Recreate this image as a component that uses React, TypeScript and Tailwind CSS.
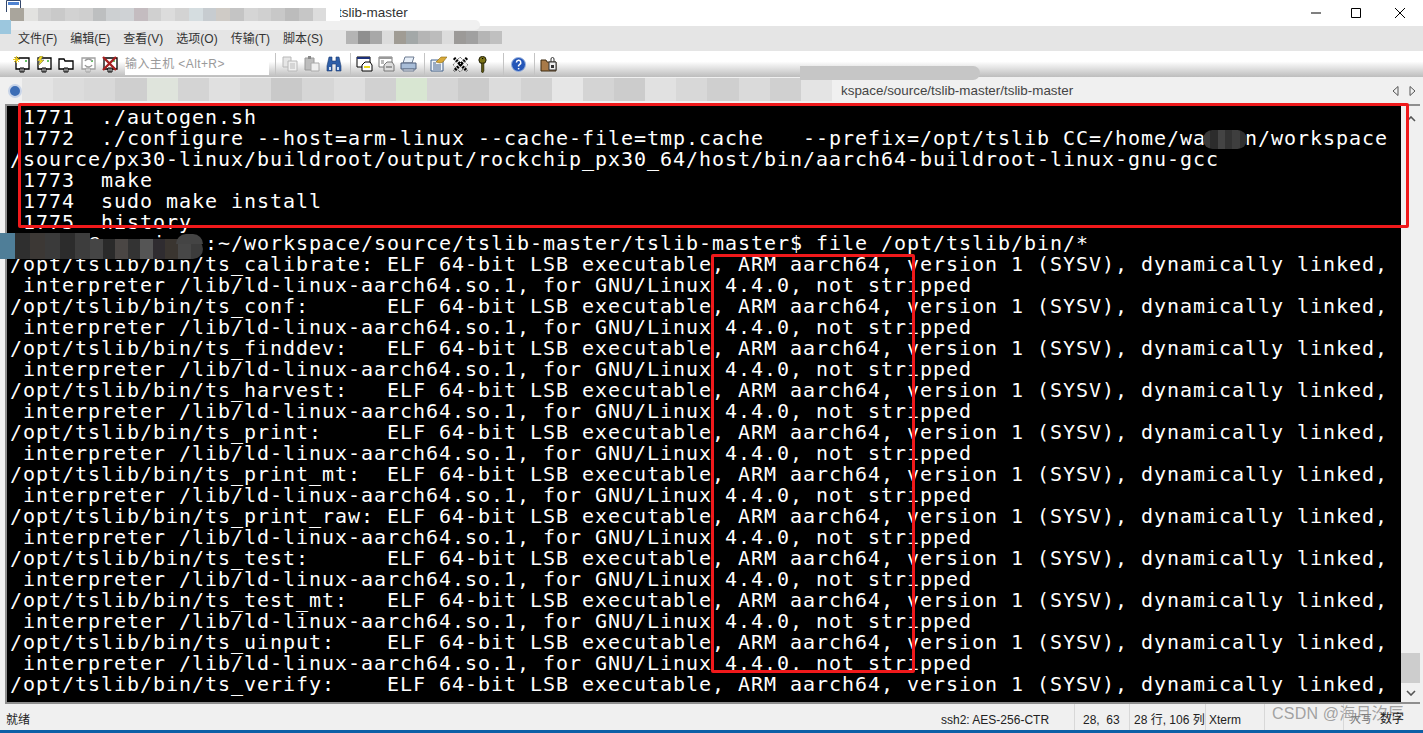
import React from 'react';

const UI_FONT = "font-['Liberation_Sans','Noto_Sans_CJK_SC',sans-serif]";

const fileRow = (name: string) => [
  `/opt/tslib/bin/${name.padEnd(13, ' ')} ELF 64-bit LSB executable, ARM aarch64, version 1 (SYSV), dynamically linked,`,
  ' interpreter /lib/ld-linux-aarch64.so.1, for GNU/Linux 4.4.0, not stripped',
];

const TERMINAL_LINES = [
  ' 1771  ./autogen.sh',
  ' 1772  ./configure --host=arm-linux --cache-file=tmp.cache   --prefix=/opt/tslib CC=/home/wa   n/workspace',
  '/source/px30-linux/buildroot/output/rockchip_px30_64/host/bin/aarch64-buildroot-linux-gnu-gcc',
  ' 1773  make',
  ' 1774  sudo make install',
  ' 1775  history',
  '      @ rmpi   :~/workspace/source/tslib-master/tslib-master$ file /opt/tslib/bin/*',
  ...fileRow('ts_calibrate:'),
  ...fileRow('ts_conf:'),
  ...fileRow('ts_finddev:'),
  ...fileRow('ts_harvest:'),
  ...fileRow('ts_print:'),
  ...fileRow('ts_print_mt:'),
  ...fileRow('ts_print_raw:'),
  ...fileRow('ts_test:'),
  ...fileRow('ts_test_mt:'),
  ...fileRow('ts_uinput:'),
  `/opt/tslib/bin/${'ts_verify:'.padEnd(13, ' ')} ELF 64-bit LSB executable, ARM aarch64, version 1 (SYSV), dynamically linked,`,
];

const MENUS = ['文件(F)', '编辑(E)', '查看(V)', '选项(O)', '传输(T)', '脚本(S)'];

// pixelated redaction blocks
function Mosaic({ colors, className }: { colors: string[]; className: string }) {
  return (
    <div className={`absolute flex overflow-hidden ${className}`}>
      {colors.map((c, i) => (
        <div key={i} className="flex-1" style={{ backgroundColor: c }} />
      ))}
    </div>
  );
}

function ConnIcon({ kind }: { kind: 'new' | 'bolt' | 'folder' | 'off' | 'x' }) {
  const stroke = kind === 'off' ? '#a0a0a0' : '#000';
  return (
    <svg width="18" height="17" viewBox="0 0 18 17" className="shrink-0">
      <path d={kind === 'folder' ? 'M2 3h5l1 2h8v8H2z' : 'M3 2h13v11H3z'} fill="#fff" stroke={stroke} strokeWidth="1.3" />
      <path d="M7 12h4v4H7z" fill="#fff" stroke={stroke} />
      <path d="M9 12v4" stroke={stroke} />
      {kind !== 'folder' && <path d="M12 5h2" stroke="#35b535" strokeWidth="1.5" />}
      {kind === 'new' && <path d="M1 1l5 5M6 1L1 6M3.5 0v7M0 3.5h7" stroke="#e8c820" strokeWidth="1" />}
      {kind === 'bolt' && <path d="M5 0L2 5h3L3 10l6-6H6l2-4z" fill="#f5e020" stroke="#555" strokeWidth=".5" />}
      {kind === 'off' && <path d="M6 5a4 4 0 0 1 7 0M13 9a4 4 0 0 1-7 0" fill="none" stroke="#999" strokeWidth="1.5" />}
      {kind === 'x' && <path d="M2 1l13 13M15 1L2 14" stroke="#a52020" strokeWidth="2.4" />}
    </svg>
  );
}

function ToolSep() {
  return <div className="w-px h-[22px] bg-[#c4c4c4]" />;
}

function CopyIcon() {
  return (
    <svg width="16" height="16" viewBox="0 0 16 16">
      <path d="M1 1h8v10H1z" fill="#e6e6e6" stroke="#b8b8b8" />
      <path d="M6 5h9v10H6z" fill="#efefef" stroke="#b8b8b8" />
      <path d="M8 8h5M8 10h5M8 12h5" stroke="#bbb" />
    </svg>
  );
}

function PasteIcon() {
  return (
    <svg width="16" height="16" viewBox="0 0 16 16">
      <path d="M1 2h9v12H1z" fill="#bdbdbd" stroke="#999" />
      <path d="M4 0h3v3H4z" fill="#888" />
      <path d="M7 7h8v8H7z" fill="#efefef" stroke="#aaa" />
    </svg>
  );
}

function BinocularsIcon() {
  return (
    <svg width="16" height="16" viewBox="0 0 16 16">
      <path d="M3 1h3v4h4V1h3l2 9v5H10V8H6v7H1v-5z" fill="#2f5fa8" stroke="#1b3a70" strokeWidth=".6" />
      <path d="M3 11h2v3H3zM11 11h2v3h-2z" fill="#cfe0f5" />
    </svg>
  );
}

function PrintSetupIcon({ dim }: { dim?: boolean }) {
  const c = dim ? '#777' : '#000';
  return (
    <svg width="17" height="17" viewBox="0 0 17 17">
      <path d="M1 1h13v10H1z" fill="#fff" stroke={c} />
      <path d="M1 1h13v2H1z" fill={dim ? '#999' : '#1c2f78'} />
      {dim && <path d="M3 5h3M3 7h3" stroke="#777" />}
      <path d="M6 9l3-3h5l2 3v6H6z" fill={dim ? '#ddd' : '#fff'} stroke={c} />
      <path d="M8 11h6" stroke={dim ? '#999' : '#e8d820'} strokeWidth="2" />
    </svg>
  );
}

function PrinterIcon() {
  return (
    <svg width="17" height="16" viewBox="0 0 17 16">
      <path d="M5 1h9l-2 6H3z" fill="#e6eef8" stroke="#6c7a90" />
      <path d="M1 7h15v6H1z" fill="#a8bdd8" stroke="#4e5f7a" />
      <path d="M3 13h11v2H3z" fill="#dfe5ee" stroke="#6c7a90" />
    </svg>
  );
}

function OptionsIcon() {
  return (
    <svg width="17" height="16" viewBox="0 0 17 16">
      <path d="M1 4h12v11H1z" fill="#f3f6fb" stroke="#40608a" />
      <path d="M3 7h3M3 9h8M3 11h8M3 13h8" stroke="#40608a" />
      <path d="M6 6l5-5h6l-4 5-3 1z" fill="#d8a93a" stroke="#8a6a10" strokeWidth=".6" />
    </svg>
  );
}

function ToolsIcon() {
  return (
    <svg width="17" height="17" viewBox="0 0 17 17">
      <path d="M2 2l13 13M15 2L2 15" stroke="#000" strokeWidth="3" strokeDasharray="2 1" />
      <path d="M8 1l8 8-8 7-7-7z" fill="none" stroke="#444" strokeDasharray="1 1" />
    </svg>
  );
}

function KeyIcon() {
  return (
    <svg width="9" height="17" viewBox="0 0 9 17">
      <circle cx="4.5" cy="4" r="3.6" fill="#7c7418" stroke="#1e1c04" />
      <path d="M3.5 7h2.4v8l-1.2 2-1.2-1z" fill="#5c5610" stroke="#1e1c04" strokeWidth=".6" />
      <path d="M4 2.5h1.2" stroke="#000" />
    </svg>
  );
}

function HelpIcon() {
  return (
    <svg width="15" height="15" viewBox="0 0 15 15">
      <circle cx="7.5" cy="7.5" r="7" fill="#2456b8" stroke="#9db4dd" />
      <path d="M5.4 5.5a2.2 2.2 0 1 1 3.2 2l-1 1v1" fill="none" stroke="#fff" strokeWidth="1.5" />
      <path d="M7.6 11v1.4" stroke="#fff" strokeWidth="1.5" />
    </svg>
  );
}

function LockedFolderIcon() {
  return (
    <svg width="17" height="16" viewBox="0 0 17 16">
      <path d="M1 4h5l1 2h9v9H1z" fill="#a87a48" stroke="#3c2a10" />
      <path d="M9 6h7v8H9z" fill="#eee" stroke="#333" />
      <path d="M11 6V3a1.5 1.5 0 0 1 3 0v3" fill="none" stroke="#333" />
      <path d="M11 9h3v3h-3z" fill="#333" />
    </svg>
  );
}

function AppIcon() {
  return (
    <svg width="15" height="12" viewBox="0 0 15 12" className="shrink-0">
      <path d="M.5.5h14v14H.5z" fill="#fff" stroke="#33476b" />
      <path d="M2 2h11v3H2z" fill="#4f83d1" />
    </svg>
  );
}

export default function App() {
  return (
    <div className={`relative w-[1423px] h-[733px] overflow-hidden bg-white flex flex-col ${UI_FONT}`}>
      {/* Title bar */}
      <div className="h-[26px] shrink-0 flex items-center bg-white pl-[6px] pr-[18px]">
        <div className="-mt-[14px]"><AppIcon /></div>
        <span className="ml-[317px] text-[13.5px] text-[#333] leading-none">tslib-master</span>
        <div className="ml-auto flex items-center gap-[30px]">
          <svg width="10" height="10" viewBox="0 0 10 10"><path d="M0 5h10" stroke="#000" /></svg>
          <svg width="10" height="10" viewBox="0 0 10 10"><path d="M.5.5h9v9h-9z" fill="none" stroke="#000" /></svg>
          <svg width="10" height="10" viewBox="0 0 10 10" className="ml-[4px]"><path d="M0 0l10 10M10 0L0 10" stroke="#000" /></svg>
        </div>
      </div>

      {/* Menu bar */}
      <div className="h-[25px] shrink-0 bg-[#e5e5e5] flex items-center pl-[18px] gap-[13px]">
        {MENUS.map((m) => (
          <span key={m} className="text-[12px] text-[#333] leading-none">{m}</span>
        ))}
      </div>

      {/* Toolbar */}
      <div className="h-[26px] shrink-0 bg-gradient-to-b from-white from-40% to-[#bdbdbd] flex items-center pl-[13px]">
        <div className="flex items-center gap-[4px]">
          <ConnIcon kind="new" />
          <ConnIcon kind="bolt" />
          <ConnIcon kind="folder" />
          <ConnIcon kind="off" />
          <ConnIcon kind="x" />
        </div>
        <div className="ml-[6px] w-[144px] h-[22px] bg-white flex items-center text-[12px] text-[#9a9a9a] tracking-[0.4px]">输入主机 &lt;Alt+R&gt;</div>
        <div className="ml-[6px] mr-[6px]"><ToolSep /></div>
        <div className="flex items-center gap-[6px]">
          <CopyIcon />
          <PasteIcon />
          <BinocularsIcon />
        </div>
        <div className="ml-[8px] mr-[5px]"><ToolSep /></div>
        <div className="flex items-center gap-[5px]">
          <PrintSetupIcon />
          <PrintSetupIcon dim />
          <PrinterIcon />
        </div>
        <div className="ml-[7px] mr-[5px]"><ToolSep /></div>
        <div className="flex items-center gap-[5px]">
          <OptionsIcon />
          <ToolsIcon />
          <div className="w-[17px] flex justify-center"><KeyIcon /></div>
        </div>
        <div className="ml-[12px] mr-[7px]"><ToolSep /></div>
        <HelpIcon />
        <div className="ml-[8px] mr-[5px]"><ToolSep /></div>
        <LockedFolderIcon />
      </div>

      {/* Tab bar */}
      <div className="h-[27px] shrink-0 bg-[#f0f0f0] flex items-center justify-between pl-[841px] pr-[7px]">
        <span className="text-[13.4px] text-[#444] leading-none mt-[1px]">kspace/source/tslib-master/tslib-master</span>
        <div className="flex items-center gap-[10px] text-[#555]">
          <svg width="7" height="10" viewBox="0 0 7 10"><path d="M6 .5v9L1 5z" fill="#f0f0f0" stroke="#555" /></svg>
          <svg width="7" height="10" viewBox="0 0 7 10"><path d="M1 .5v9L6 5z" fill="#f0f0f0" stroke="#555" /></svg>
        </div>
      </div>

      {/* Terminal and scrollbar */}
      <div className="flex-1 min-h-0 flex pl-[5px] pr-[3px] bg-[#f0f0f0]">
        <div className="flex-1 min-w-0 border-t-2 border-l-2 border-b-2 border-[#8e8e8e] bg-black overflow-hidden pl-[3px] pt-[1px]">
          {TERMINAL_LINES.map((line, i) => (
            <div
              key={i}
              className="h-[21px] leading-[21px] whitespace-pre text-white text-[20px] tracking-[0.96px] font-['DejaVu_Sans_Mono','Liberation_Mono',monospace]"
            >
              {line}
            </div>
          ))}
        </div>
        <div className="w-[19px] shrink-0 border-t-2 border-b-2 border-[#8e8e8e] bg-[#f0f0f0] flex flex-col items-center justify-between pt-[10px] pb-[6px]">
          <svg width="10" height="6" viewBox="0 0 10 6"><path d="M1 5l4-4 4 4" fill="none" stroke="#555" strokeWidth="1.6" /></svg>
          <div className="flex-1 flex flex-col justify-end w-full pb-[7px]">
            <div className="h-[30px] w-full bg-[#cdcdcd]" />
          </div>
          <svg width="10" height="6" viewBox="0 0 10 6"><path d="M1 1l4 4 4-4" fill="none" stroke="#555" strokeWidth="1.6" /></svg>
        </div>
      </div>

      {/* Status bar */}
      <div className="h-[26px] shrink-0 bg-[#f0f0f0] flex items-center text-[12px] text-[#222] leading-none">
        <span className="pl-[6px] w-[941px] pt-[5px]">就绪</span>
        <span className="w-[134px] h-full pt-[5px] flex items-center border-r border-[#d8d8d8]">ssh2: AES-256-CTR</span>
        <span className="w-[55px] pl-[8px] h-full pt-[5px] flex items-center border-r border-[#d8d8d8] whitespace-pre">28,  63</span>
        <span className="w-[76px] pl-[4px] h-full pt-[5px] flex items-center overflow-hidden whitespace-nowrap border-r border-[#d8d8d8]">28 行, 106 列</span>
        <span className="w-[59px] pl-[3px] h-full pt-[5px] flex items-center border-r border-[#d8d8d8]">Xterm</span>
        <span className="w-[79px] h-full border-r border-[#d8d8d8]" />
      </div>
      <div className="h-[3px] shrink-0 bg-[#0d5fa6]" />

      {/* Redactions */}
      <div className="absolute left-0 top-[20px] w-[480px] h-[10px] bg-[#f0f0f0] rounded-r-full" />
      <Mosaic
        className="left-[10px] top-[8px] w-[330px] h-[13px]"
        colors={['#a9a59c', '#e2e2e0', '#cfcfcf', '#c9c9c9', '#d2d2d2', '#cfcfcf', '#bdbfc0', '#cdd0d2', '#cfd2d5', '#c4bcc0', '#d0d0d0', '#dcdcdc', '#d3d3d3', '#d5dde0', '#c7ccd0', '#cfcbc6', '#c4c4c4', '#d5d5d5', '#d0d0d0', '#c8c8c8', '#bcbcbc', '#c6c6c6', '#dcdcdc', '#ffffff']}
      />
      <div className="absolute left-0 top-[20px] w-[11px] h-[14px] bg-[#9cc7de]" />
      <Mosaic
        className="left-[346px] top-[31px] w-[156px] h-[13px]"
        colors={['#b4b4b4', '#8f8f8f', '#a8a8a8', '#dcdcdc', '#a09c94', '#a3a8a8', '#b5b5b5', '#bcbcbc', '#dcdcdc', '#9c9a98', '#a0a0a0', '#b5b5b5', '#c0c0c0']}
      />
      <Mosaic
        className="left-[22px] top-[78px] w-[810px] h-[23px]"
        colors={['#e3e3e3', '#dcdcdc', '#d8d8d8', '#cfcfcf', '#dfe4dc', '#d4d4d4', '#e0e0e0', '#d9d9d9', '#c9c9c9', '#d6d6d6', '#dedede', '#d1d1d1', '#d8e6d2', '#d5d5d5', '#cbcbcb', '#dcdcdc', '#d2d2d2', '#e6e6e6', '#d4d4d4', '#cccccc', '#e1e1e1', '#d8d8d8', '#cfcfcf', '#dadada', '#d0d0d0', '#e4e4e4']}
      />
      <div className="absolute left-[8px] top-[84px] w-[14px] h-[14px] rounded-full bg-[#3c6db5] border-2 border-[#c8d4e8]" />
      <div className="absolute left-[800px] top-[66px] w-[180px] h-[14px] rounded-r-full bg-[#c6c6c6]" />
      <Mosaic
        className="left-[1203px] top-[130px] w-[44px] h-[19px] rounded-full"
        colors={['#3a3a3a', '#2c2c2c', '#444444', '#333333', '#3e3e3e', '#2e2e2e']}
      />
      <Mosaic
        className="left-0 top-[233px] w-[90px] h-[26px]"
        colors={['#4f7e98', '#2f2f2f', '#3c3835', '#3a3a3a', '#2c2c2c', '#3d3d3d']}
      />
      <Mosaic
        className="left-[90px] top-[239px] w-[113px] h-[20px] rounded-r-full"
        colors={['#454545', '#2a2a2a', '#4a4644', '#333333', '#555555', '#2f2c30', '#3a3530', '#474747', '#3c3c3c']}
      />
      <div className="absolute left-[176px] top-[234px] w-[27px] h-[10px] rounded-t-full bg-[#444444]" />

      {/* Red annotation boxes */}
      <div className="absolute left-[18px] top-[103px] w-[1391px] h-[125px] border-[3px] border-[#f0191b] rounded-[2px]" />
      <div className="absolute left-[711px] top-[254px] w-[204px] h-[419px] border-[3px] border-[#f0191b] rounded-[2px]" />

      {/* Site watermark */}
      <span className="absolute left-[1272px] top-[704px] text-[16px] tracking-[0.2px] leading-[20px] text-[#8d8d8d]/80">CSDN @海月汐辰</span>
      <span className="absolute left-[1350px] top-[712px] text-[11px] leading-[14px] text-[#777]">大写</span>
      <span className="absolute left-[1380px] top-[712px] text-[12px] leading-[14px] text-[#222]">数字</span>
    </div>
  );
}
